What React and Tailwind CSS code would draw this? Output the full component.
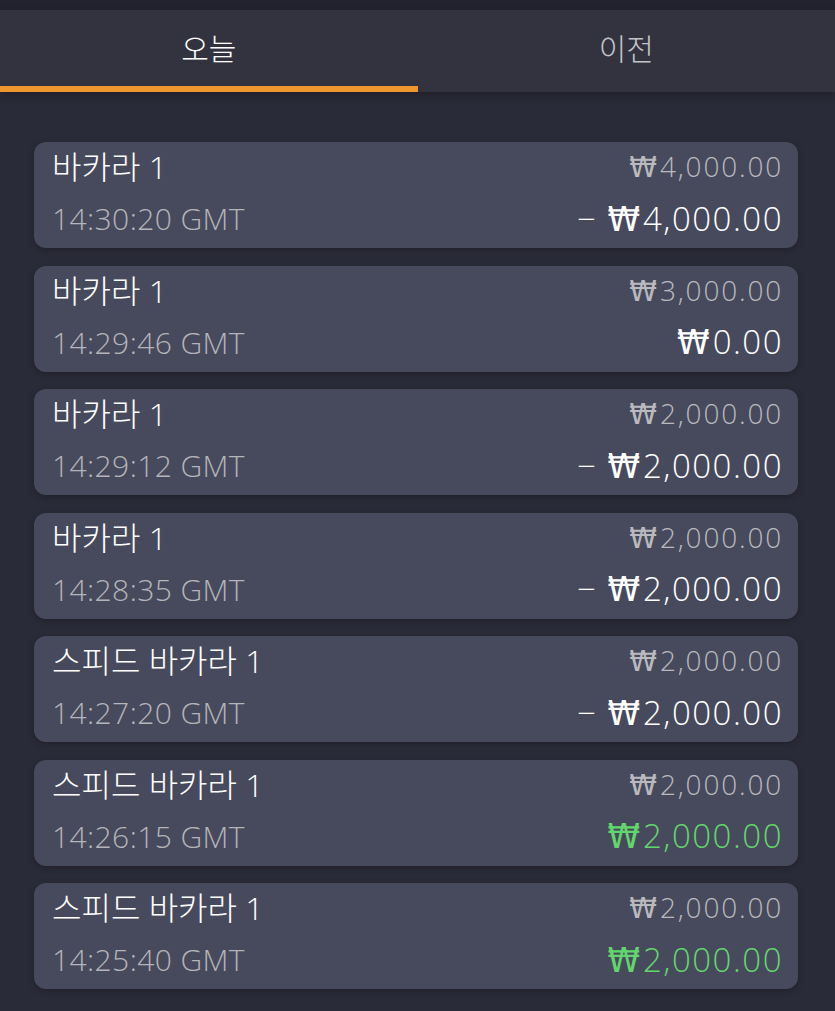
import React from 'react';

const rows = [
  { game: '바카라 1', time: '14:30:20 GMT', bet: '4,000.00', result: '4,000.00', kind: 'loss' },
  { game: '바카라 1', time: '14:29:46 GMT', bet: '3,000.00', result: '0.00', kind: 'even' },
  { game: '바카라 1', time: '14:29:12 GMT', bet: '2,000.00', result: '2,000.00', kind: 'loss' },
  { game: '바카라 1', time: '14:28:35 GMT', bet: '2,000.00', result: '2,000.00', kind: 'loss' },
  { game: '스피드 바카라 1', time: '14:27:20 GMT', bet: '2,000.00', result: '2,000.00', kind: 'loss' },
  { game: '스피드 바카라 1', time: '14:26:15 GMT', bet: '2,000.00', result: '2,000.00', kind: 'win' },
  { game: '스피드 바카라 1', time: '14:25:40 GMT', bet: '2,000.00', result: '2,000.00', kind: 'win' },
];

const font = { fontFamily: '"Open Sans", "Noto Sans CJK KR", sans-serif' };

// the won sign in the screenshot is a wide double-barred W
const Won = () => <span className="font-['DejaVu_Sans'] font-normal tracking-normal mr-[3px]">₩</span>;

const Card = ({ row }) => (
  <div className="h-[106px] rounded-[12px] bg-[#474a5c] shadow-[0_2px_6px_rgba(0,0,0,0.25)] pl-[18px] pr-[15px] pt-[5px]">
    <div className="flex justify-between items-center h-[40px]">
      <span className="text-[32px] text-white leading-[40px] font-light">{row.game}</span>
      <span className="text-[28px] text-[#b9b9be] leading-[40px] font-light tracking-[1.8px]">
        <Won />
        {row.bet}
      </span>
    </div>
    <div className="flex justify-between items-center h-[44px] mt-[10px]">
      <span className="text-[30px] text-[#b4b4ba] leading-[44px] font-light tracking-[0.4px]">{row.time}</span>
      <span
        className={
          row.kind === 'win'
            ? 'text-[33px] text-[#62d66c] leading-[44px] font-light tracking-[1.5px]'
            : 'text-[33px] text-white leading-[44px] font-light tracking-[1.5px]'
        }
      >
        {row.kind === 'loss' && <span className="mr-[10px]">−</span>}
        <Won />
        {row.result}
      </span>
    </div>
  </div>
);

const App = () => {
  return (
    <div className="w-[835px] h-[1011px] bg-[#2a2b38] overflow-hidden" style={font}>
      <div className="h-[10px] bg-[#22232e]" />
      <div className="flex h-[82px] bg-[#32333f] shadow-[0_4px_8px_rgba(0,0,0,0.25)]">
        <div className="w-1/2 flex flex-col">
          <div className="flex-1 flex items-center justify-center text-[30px] text-white font-light">오늘</div>
          <div className="h-[6px] bg-[#f0962f]" />
        </div>
        <div className="w-1/2 flex items-center justify-center pb-[6px] text-[30px] text-[#c4c4c8] font-light">이전</div>
      </div>
      <div className="pl-[34px] pr-[37px] pt-[50px] flex flex-col gap-[17.5px]">
        {rows.map((r, i) => (
          <Card key={i} row={r} />
        ))}
      </div>
    </div>
  );
};

export default App;
